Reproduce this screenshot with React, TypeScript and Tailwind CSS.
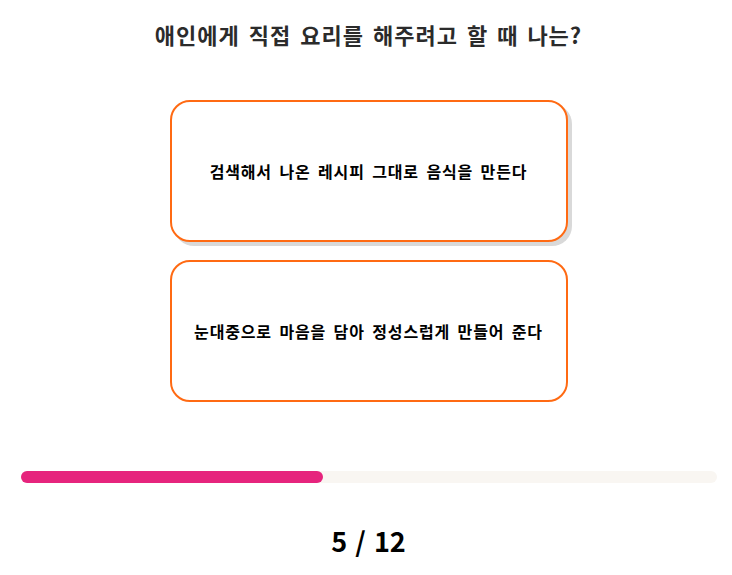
const question = '애인에게 직접 요리를 해주려고 할 때 나는?'
const answers = ['검색해서 나온 레시피 그대로 음식을 만든다', '눈대중으로 마음을 담아 정성스럽게 만들어 준다']

function AnswerCard({ text, active }: { text: string; active?: boolean }) {
  return (
    <button
      className={
        'flex h-[142px] w-[398px] items-center justify-center rounded-[20px] border-2 border-[#ff6a13] bg-white text-[16px] font-bold tracking-[0.85px] [word-spacing:3px] text-black ' +
        (active ? 'shadow-[4px_4px_0_#d9d9d9]' : '')
      }
    >
      {text}
    </button>
  )
}

export default function App() {
  const current = 5
  const total = 12

  return (
    <div
      className="flex min-h-[575px] w-full flex-col items-center bg-white pl-[5px]"
      style={{ fontFamily: '"Noto Sans CJK KR", "Noto Sans", sans-serif' }}
    >
      <h1 className="mt-[16px] text-[22px] font-bold leading-[36px] tracking-[1px] [word-spacing:3px] text-[#2b2b2b]">
        {question}
      </h1>

      <div className="mt-[48px] flex flex-col gap-[18px]">
        {answers.map((a, i) => (
          <AnswerCard key={a} text={a} active={i === 0} />
        ))}
      </div>

      {/* Progress */}
      <div className="mt-[69px] h-[12px] w-[696px] rounded-full bg-[#f9f6f2]">
        <div className="h-full w-[302px] rounded-full bg-[#e6247d]" />
      </div>

      <div className="mt-[40px] text-[27px] font-bold leading-[36px] [word-spacing:2px] text-black">
        {current} / {total}
      </div>
    </div>
  )
}
